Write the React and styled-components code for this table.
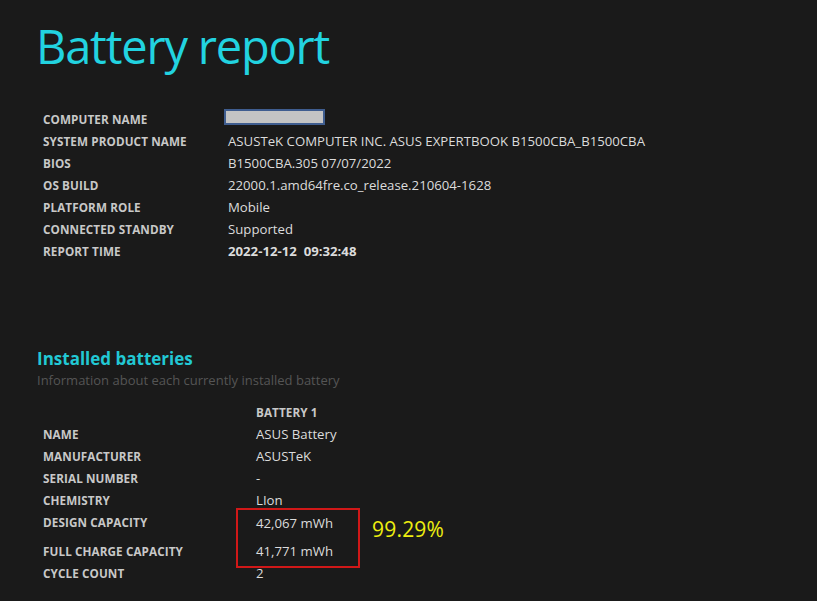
import React from "react";
import styled, { createGlobalStyle } from "styled-components";

const Global = createGlobalStyle`
  html, body {
    margin: 0;
    padding: 0;
    background: #1a1a1a;
  }
  body {
    font-family: "Open Sans", "Noto Sans", sans-serif;
    width: 817px;
    height: 601px;
    overflow: hidden;
  }
`;

const Page = styled.div`
  position: relative;
  width: 817px;
  height: 601px;
  background: #1a1a1a;
  padding: 14px 0 0 0;
  box-sizing: border-box;
`;

const Title = styled.h1`
  margin: 0 0 0 36px;
  font-size: 47px;
  font-weight: 400;
  color: #22d3e0;
  line-height: 64px;
  letter-spacing: -1.2px;
`;

const InfoTable = styled.div`
  display: grid;
  grid-template-columns: ${(p) => p.$labelWidth}px auto;
  grid-auto-rows: 22px;
  align-items: center;
  margin: ${(p) => p.$margin};
`;

const Label = styled.div`
  font-size: 11.7px;
  font-weight: 700;
  color: #c8c8c8;
  text-transform: uppercase;
  letter-spacing: 0.1px;
`;

const Value = styled.div`
  font-size: 13.2px;
  color: #dcdcdc;
  font-weight: ${(p) => (p.$bold ? 700 : 400)};
  white-space: nowrap;
`;

const Masked = styled.div`
  width: 97px;
  height: 12px;
  margin-left: -4px;
  margin-top: -5px;
  background: #c4c4c4;
  border: 2px solid #3f5d8f;
`;

const SectionTitle = styled.h2`
  margin: 0 0 0 37px;
  font-size: 17px;
  font-weight: 700;
  color: #22c8d4;
  line-height: 22px;
`;

const SectionSub = styled.div`
  margin-left: 37px;
  font-size: 13px;
  color: #555555;
  line-height: 20px;
`;

const Tall = styled.div`
  height: 29px;
  display: flex;
  align-items: flex-start;
  padding-top: 3px;
  box-sizing: border-box;
`;

const Highlight = styled.div`
  position: absolute;
  left: 236px;
  top: 508px;
  width: 124px;
  height: 60px;
  box-sizing: border-box;
  border: 2px solid #d01818;
`;

const Ratio = styled.div`
  position: absolute;
  left: 372px;
  top: 515px;
  font-size: 21px;
  color: #eeee10;
  letter-spacing: 0.2px;
`;

const BatteryTable = styled.div`
  display: grid;
  grid-template-columns: 213px auto;
  grid-auto-rows: minmax(22px, auto);
  align-items: center;
  margin: 11px 0 0 43px;
`;

const system = [
  ["System product name", "ASUSTeK COMPUTER INC. ASUS EXPERTBOOK B1500CBA_B1500CBA"],
  ["BIOS", "B1500CBA.305 07/07/2022"],
  ["OS build", "22000.1.amd64fre.co_release.210604-1628"],
  ["Platform role", "Mobile"],
  ["Connected standby", "Supported"],
];

const battery = [
  ["Name", "ASUS Battery"],
  ["Manufacturer", "ASUSTeK"],
  ["Serial number", "-"],
  ["Chemistry", "LIon"],
];

export default function App() {
  return (
    <Page>
      <Global />
      <Title>Battery report</Title>
      <InfoTable $labelWidth={185} $margin="30px 0 0 43px">
        <Label>Computer name</Label>
        <Masked />
        {system.map(([k, v]) => (
          <React.Fragment key={k}>
            <Label>{k}</Label>
            <Value>{v}</Value>
          </React.Fragment>
        ))}
        <Label>Report time</Label>
        <Value $bold>2022-12-12&nbsp;&nbsp;09:32:48</Value>
      </InfoTable>

      <div style={{ height: 86 }} />
      <SectionTitle>Installed batteries</SectionTitle>
      <SectionSub>Information about each currently installed battery</SectionSub>

      <BatteryTable>
        <div />
        <Label>Battery 1</Label>
        {battery.map(([k, v]) => (
          <React.Fragment key={k}>
            <Label>{k}</Label>
            <Value>{v}</Value>
          </React.Fragment>
        ))}
        <Tall><Label>Design capacity</Label></Tall>
        <Tall><Value>42,067 mWh</Value></Tall>
        <Label>Full charge capacity</Label>
        <Value>41,771 mWh</Value>
        <Label>Cycle count</Label>
        <Value>2</Value>
      </BatteryTable>

      <Highlight />
      <Ratio>99.29%</Ratio>
    </Page>
  );
}
